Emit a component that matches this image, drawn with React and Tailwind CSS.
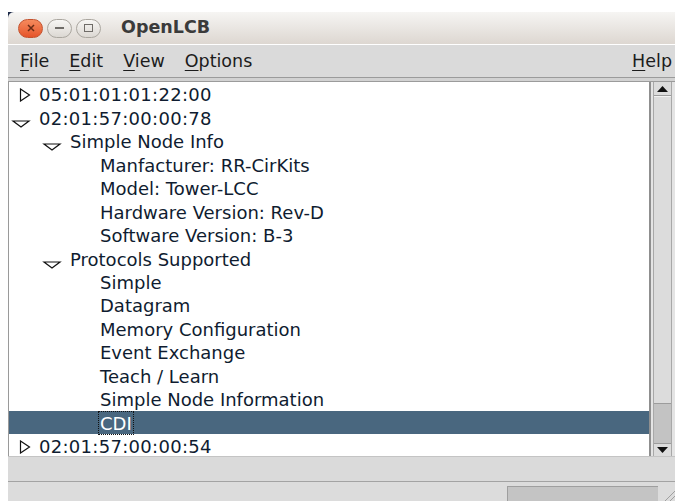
import React from "react";

const rows = [
  { level: 0, state: "closed", text: "05:01:01:01:22:00" },
  { level: 0, state: "open", text: "02:01:57:00:00:78" },
  { level: 1, state: "open", text: "Simple Node Info" },
  { level: 2, text: "Manfacturer: RR-CirKits" },
  { level: 2, text: "Model: Tower-LCC" },
  { level: 2, text: "Hardware Version: Rev-D" },
  { level: 2, text: "Software Version: B-3" },
  { level: 1, state: "open", text: "Protocols Supported" },
  { level: 2, text: "Simple" },
  { level: 2, text: "Datagram" },
  { level: 2, text: "Memory Configuration" },
  { level: 2, text: "Event Exchange" },
  { level: 2, text: "Teach / Learn" },
  { level: 2, text: "Simple Node Information" },
  { level: 2, text: "CDI", selected: true },
  { level: 0, state: "closed", text: "02:01:57:00:00:54" },
];

const indent = ["pl-[2px] tracking-[0.3px]", "pl-[33px]", "pl-[63px]"];

function Expander({ state }) {
  if (state === "closed") {
    return (
      <svg width="20" height="14" viewBox="0 0 20 14" className="shrink-0 mt-[2px]">
        <path d="M9.5 1 L18.5 7 L9.5 13 Z" fill="none" stroke="#111" strokeWidth="1.2" strokeLinejoin="miter" />
      </svg>
    );
  }
  if (state === "open") {
    return (
      <svg width="20" height="14" viewBox="0 0 20 14" className="shrink-0 mt-[11px]">
        <path d="M2 5 L18 5 L10 11 Z" fill="none" stroke="#111" strokeWidth="1.2" strokeLinejoin="miter" />
      </svg>
    );
  }
  return <div className="w-[20px] shrink-0" />;
}

function Menu({ letter, rest }) {
  return (
    <span>
      <span className="underline underline-offset-[3px] decoration-1">{letter}</span>
      {rest}
    </span>
  );
}

function CircleButton({ kind }) {
  if (kind === "close") {
    return (
      <div className="w-[25px] h-[19px] rounded-full bg-gradient-to-b from-[#f58a5c] to-[#e5542a] border border-[#c5532f] flex items-center justify-center">
        <svg width="8" height="8" viewBox="0 0 8 8">
          <path d="M1 1 L7 7 M7 1 L1 7" stroke="#6a2c16" strokeWidth="1.5" />
        </svg>
      </div>
    );
  }
  return (
    <div className="w-[25px] h-[19px] rounded-full bg-gradient-to-b from-[#f7f6f4] to-[#dcd8d3] border border-[#aaa69f] flex items-center justify-center">
      {kind === "min" ? (
        <div className="w-[9px] h-[1.5px] bg-[#6f6c68]" />
      ) : (
        <div className="w-[9px] h-[8px] border border-[#6f6c68]" />
      )}
    </div>
  );
}

export default function App() {
  return (
    <div
      className="w-[675px] h-[501px] bg-white overflow-hidden pt-[12px] pl-[8px]"
      style={{ fontFamily: '"DejaVu Sans", Verdana, sans-serif' }}
    >
      <div className="h-full bg-[#1c2947] flex flex-col">
        {/* title bar */}
        <div className="h-[33px] shrink-0 rounded-tl-[6px] bg-gradient-to-b from-[#f6f5f3] to-[#ddd7d1] border-b border-white flex items-center pl-[10px]">
          <div className="flex items-center gap-[4px]">
            <CircleButton kind="close" />
            <CircleButton kind="min" />
            <CircleButton kind="max" />
          </div>
          <div className="ml-[20px] font-bold text-[#3b3b3b] text-[17.5px] leading-none">OpenLCB</div>
        </div>

        {/* menu bar */}
        <div className="h-[32px] shrink-0 bg-[#dadada] flex items-center text-[17.5px] text-[#1c1c1c] pl-[12px] pr-[3px]">
          <div className="flex items-center gap-[20px]">
            <Menu letter="F" rest="ile" />
            <Menu letter="E" rest="dit" />
            <Menu letter="V" rest="iew" />
            <Menu letter="O" rest="ptions" />
          </div>
          <div className="ml-auto">
            <Menu letter="H" rest="elp" />
          </div>
        </div>

        {/* separator */}
        <div className="h-[5px] shrink-0 bg-[#d2d2d2] border-t border-b border-[#9b9b9b]" />

        {/* tree + scrollbar */}
        <div className="h-[374px] shrink-0 flex bg-white">
          <div className="flex-1 border-l border-[#9a9a9a] overflow-hidden">
            {rows.map((r, i) => (
              <div
                key={i}
                className={`h-[23.47px] flex items-center text-[18px] leading-none ${indent[r.level]} ${
                  r.selected ? "bg-[#49677f] text-white" : "text-[#0f1c30]"
                }`}
              >
                <div className="h-full flex items-center w-[20px] shrink-0">
                  <Expander state={r.state} />
                </div>
                <div className="ml-[8px] pt-[3px]">
                  {r.selected ? (
                    <span className="border border-dotted border-[#111] px-[1px] -ml-[2px] pt-[1px]">{r.text}</span>
                  ) : (
                    r.text
                  )}
                </div>
              </div>
            ))}
          </div>

          {/* vertical scrollbar */}
          <div className="w-[26px] shrink-0 bg-[#e4e4e4] border-l-2 border-[#8f8f8f] flex">
            <div className="ml-[2px] w-[19px] flex flex-col border-l border-r border-[#a8a8a8] bg-[#c3c3c3]">
              <div className="h-[14px] shrink-0 bg-[#dcdcdc] border-b border-[#9c9c9c] flex items-center justify-center">
                <svg width="11" height="6" viewBox="0 0 11 6">
                  <path d="M0 6 L5.5 0 L11 6 Z" fill="#111" />
                </svg>
              </div>
              <div className="h-[308px] shrink-0 bg-[#dcdcdc] border-b border-[#9c9c9c] border-t border-t-[#f2f2f2]" />
              <div className="flex-1" />
              <div className="h-[13px] shrink-0 bg-[#dcdcdc] border-t border-[#9c9c9c] flex items-center justify-center">
                <svg width="11" height="6" viewBox="0 0 11 6">
                  <path d="M0 0 L11 0 L5.5 6 Z" fill="#111" />
                </svg>
              </div>
            </div>
          </div>
        </div>

        {/* empty area below the tree */}
        <div className="h-[25px] shrink-0 bg-[#dadada] border-t border-[#c4c4c4]" />

        {/* status bar */}
        <div className="flex-1 bg-[#dcdcdc] border-t border-[#a3a3a3] flex pt-[4px]">
          <div className="ml-[499px] w-[151px] bg-[#c4c4c4] border-t border-l border-[#9f9f9f]" />
          <div className="flex-1 flex items-end justify-end">
            <svg width="14" height="14" viewBox="0 0 14 14">
              <path d="M14 4 L4 14 M14 9 L9 14" stroke="#a0a0a0" strokeWidth="1" />
            </svg>
          </div>
        </div>
      </div>
    </div>
  );
}
